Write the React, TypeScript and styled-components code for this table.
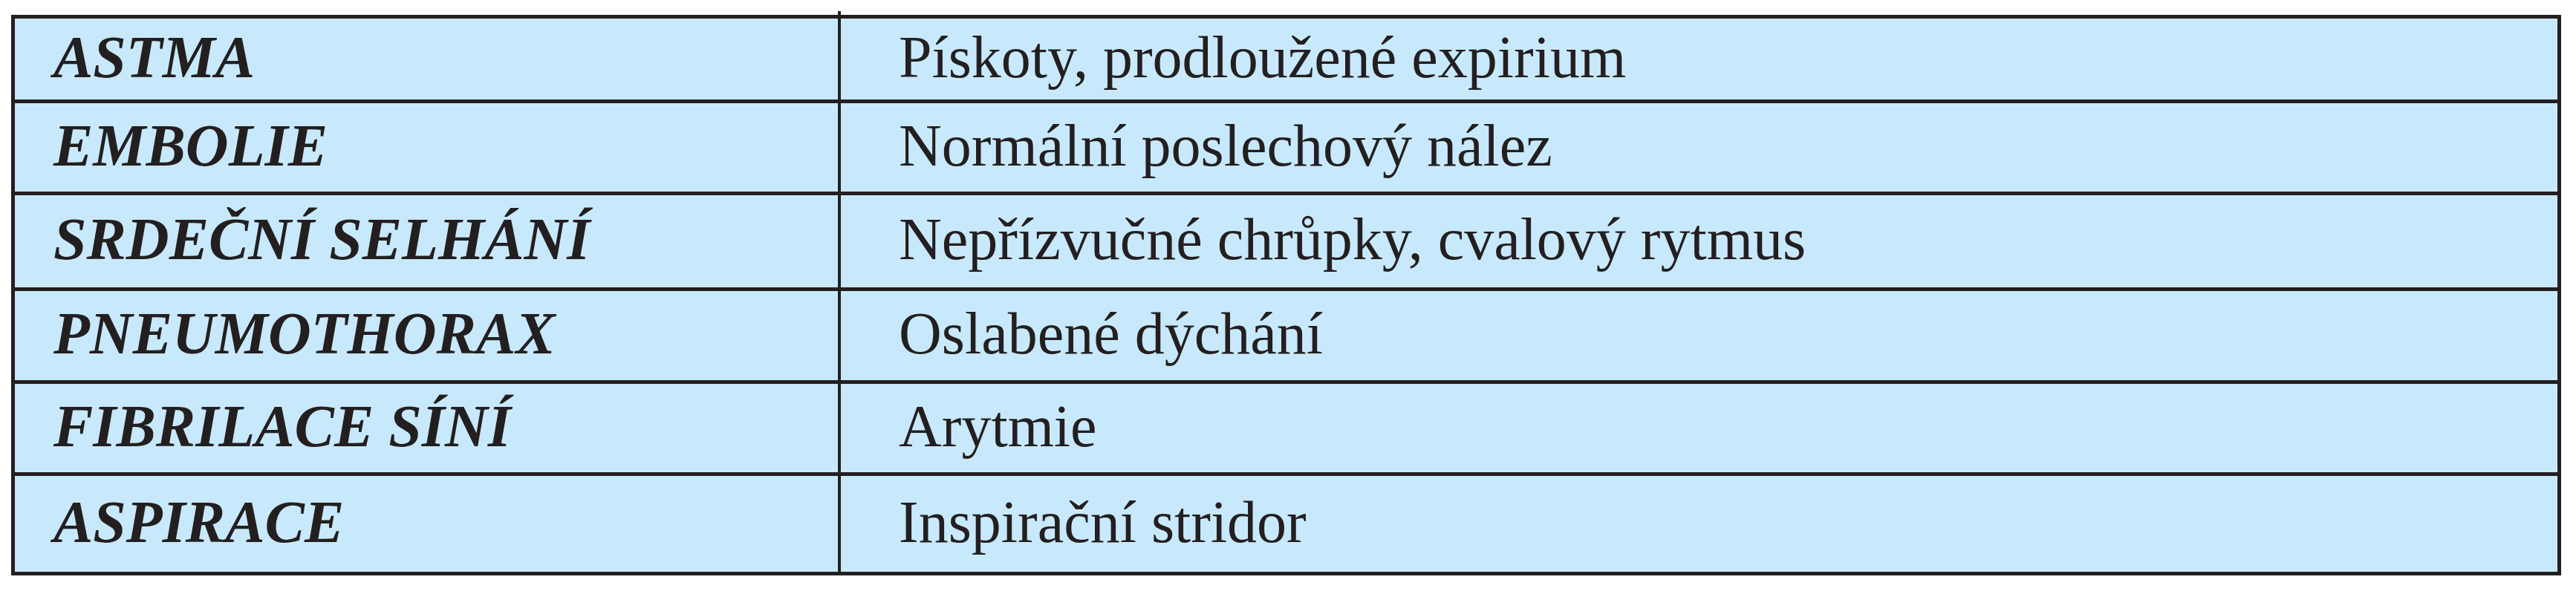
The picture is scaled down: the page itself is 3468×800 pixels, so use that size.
import styled, { createGlobalStyle } from "styled-components";

const ink = "#231f20";

const rows = [
  { diagnosis: "ASTMA", finding: "Pískoty, prodloužené expirium", height: 109 },
  { diagnosis: "EMBOLIE", finding: "Normální poslechový nález", height: 119 },
  { diagnosis: "SRDEČNÍ SELHÁNÍ", finding: "Nepřízvučné chrůpky, cvalový rytmus", height: 124 },
  { diagnosis: "PNEUMOTHORAX", finding: "Oslabené dýchání", height: 120 },
  { diagnosis: "FIBRILACE SÍNÍ", finding: "Arytmie", height: 119 },
  { diagnosis: "ASPIRACE", finding: "Inspirační stridor", height: 129 },
];

const GlobalStyle = createGlobalStyle`
  body {
    margin: 0;
    background: #ffffff;
  }
`;

const Page = styled.div`
  padding: 20px 0 0 15px;
`;

const Table = styled.div`
  position: relative;
  width: 3433px;
  box-sizing: border-box;
  border: 5px solid ${ink};
  background-color: #c8e9fb;
  font-family: "Liberation Serif", "Times New Roman", serif;
  font-size: 80px;
  line-height: 80px;
  color: ${ink};

  /* the column rule pokes a little above the top border */
  &::before {
    content: "";
    position: absolute;
    top: -10px;
    left: 1108px;
    width: 4px;
    height: 10px;
    background: ${ink};
  }
`;

const Row = styled.div<{ $height: number }>`
  display: grid;
  grid-template-columns: 1112px 1fr;
  box-sizing: content-box;
  height: ${(p) => p.$height}px;
  & + & {
    border-top: 5px solid ${ink};
  }
`;

const Cell = styled.div`
  display: flex;
  align-items: center;
  padding-bottom: 6px;
  white-space: nowrap;
`;

const Diagnosis = styled(Cell)`
  box-sizing: border-box;
  border-right: 4px solid ${ink};
  padding-left: 52px;
  font-weight: 700;
  font-style: italic;
`;

const Finding = styled(Cell)`
  padding-left: 78px;
`;

const App = () => {
  return (
    <Page>
      <GlobalStyle />
      <Table>
        {rows.map((row) => (
          <Row key={row.diagnosis} $height={row.height}>
            <Diagnosis>{row.diagnosis}</Diagnosis>
            <Finding>{row.finding}</Finding>
          </Row>
        ))}
      </Table>
    </Page>
  );
};

export default App;
